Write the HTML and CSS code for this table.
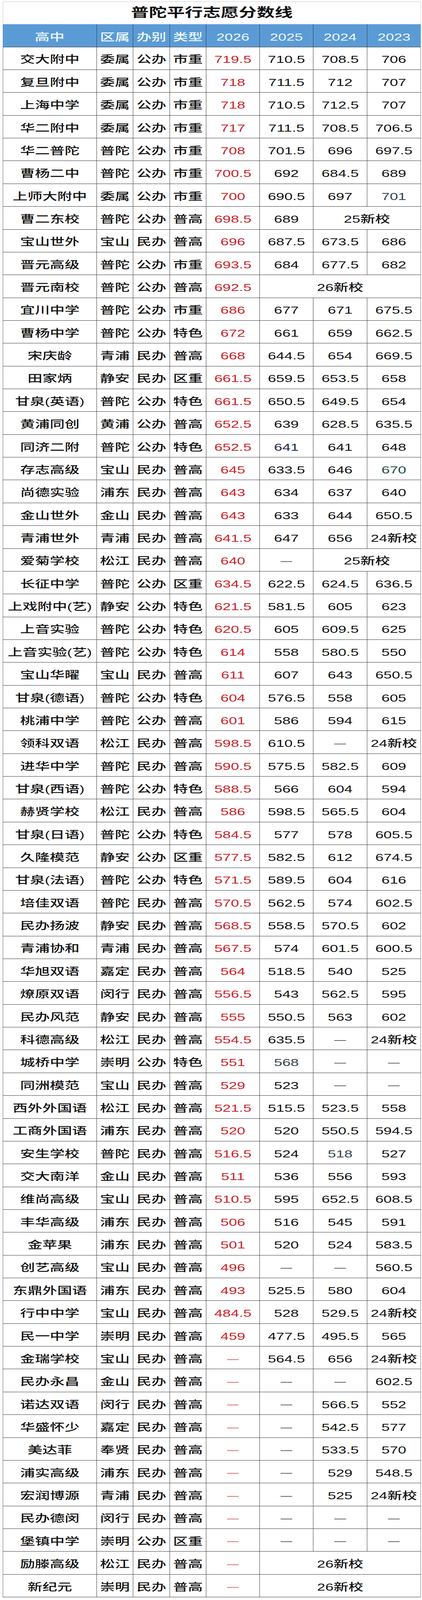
FILE: index.html
```html
<!DOCTYPE html>
<html lang="zh-CN">
<head>
<meta charset="utf-8">
<title>普陀平行志愿分数线</title>
<link rel="stylesheet" href="styles.css">
</head>
<body>
<div class="sheet">
  <div class="title"><span>普陀平行志愿分数线</span></div>
  <div class="row head">
    <div class="c"><span>高中</span></div><div class="c"><span>区属</span></div><div class="c"><span>办别</span></div><div class="c"><span>类型</span></div>
    <div class="c"><span>2026</span></div><div class="c"><span>2025</span></div><div class="c"><span>2024</span></div><div class="c"><span>2023</span></div>
  </div>

  <div class="row"><div class="c"><span>交大附中</span></div><div class="c"><span>委属</span></div><div class="c"><span>公办</span></div><div class="c"><span>市重</span></div><div class="c r"><span>719.5</span></div><div class="c"><span>710.5</span></div><div class="c"><span>708.5</span></div><div class="c"><span>706</span></div></div>
  <div class="row"><div class="c"><span>复旦附中</span></div><div class="c"><span>委属</span></div><div class="c"><span>公办</span></div><div class="c"><span>市重</span></div><div class="c r"><span>718</span></div><div class="c"><span>711.5</span></div><div class="c"><span>712</span></div><div class="c"><span>707</span></div></div>
  <div class="row"><div class="c"><span>上海中学</span></div><div class="c"><span>委属</span></div><div class="c"><span>公办</span></div><div class="c"><span>市重</span></div><div class="c r"><span>718</span></div><div class="c"><span>710.5</span></div><div class="c"><span>712.5</span></div><div class="c"><span>707</span></div></div>
  <div class="row"><div class="c"><span>华二附中</span></div><div class="c"><span>委属</span></div><div class="c"><span>公办</span></div><div class="c"><span>市重</span></div><div class="c r"><span>717</span></div><div class="c"><span>711.5</span></div><div class="c"><span>708.5</span></div><div class="c"><span>706.5</span></div></div>
  <div class="row"><div class="c"><span>华二普陀</span></div><div class="c"><span>普陀</span></div><div class="c"><span>公办</span></div><div class="c"><span>市重</span></div><div class="c r"><span>708</span></div><div class="c"><span>701.5</span></div><div class="c"><span>696</span></div><div class="c"><span>697.5</span></div></div>
  <div class="row"><div class="c"><span>曹杨二中</span></div><div class="c"><span>普陀</span></div><div class="c"><span>公办</span></div><div class="c"><span>市重</span></div><div class="c r"><span>700.5</span></div><div class="c"><span>692</span></div><div class="c"><span>684.5</span></div><div class="c"><span>689</span></div></div>
  <div class="row"><div class="c"><span>上师大附中</span></div><div class="c"><span>委属</span></div><div class="c"><span>公办</span></div><div class="c"><span>市重</span></div><div class="c r"><span>700</span></div><div class="c"><span>690.5</span></div><div class="c"><span>697</span></div><div class="c slate"><span>701</span></div></div>
  <div class="row"><div class="c"><span>曹二东校</span></div><div class="c"><span>普陀</span></div><div class="c"><span>公办</span></div><div class="c"><span>普高</span></div><div class="c r"><span>698.5</span></div><div class="c"><span>689</span></div><div class="c span2"><span>25新校</span></div></div>
  <div class="row"><div class="c"><span>宝山世外</span></div><div class="c"><span>宝山</span></div><div class="c"><span>民办</span></div><div class="c"><span>普高</span></div><div class="c r"><span>696</span></div><div class="c"><span>687.5</span></div><div class="c"><span>673.5</span></div><div class="c"><span>686</span></div></div>
  <div class="row"><div class="c"><span>晋元高级</span></div><div class="c"><span>普陀</span></div><div class="c"><span>公办</span></div><div class="c"><span>市重</span></div><div class="c r"><span>693.5</span></div><div class="c"><span>684</span></div><div class="c"><span>677.5</span></div><div class="c"><span>682</span></div></div>
  <div class="row"><div class="c"><span>晋元南校</span></div><div class="c"><span>普陀</span></div><div class="c"><span>公办</span></div><div class="c"><span>普高</span></div><div class="c r"><span>692.5</span></div><div class="c span3"><span>26新校</span></div></div>
  <div class="row"><div class="c"><span>宜川中学</span></div><div class="c"><span>普陀</span></div><div class="c"><span>公办</span></div><div class="c"><span>市重</span></div><div class="c r"><span>686</span></div><div class="c"><span>677</span></div><div class="c"><span>671</span></div><div class="c"><span>675.5</span></div></div>
  <div class="row"><div class="c"><span>曹杨中学</span></div><div class="c"><span>普陀</span></div><div class="c"><span>公办</span></div><div class="c"><span>特色</span></div><div class="c r"><span>672</span></div><div class="c"><span>661</span></div><div class="c"><span>659</span></div><div class="c"><span>662.5</span></div></div>
  <div class="row"><div class="c"><span>宋庆龄</span></div><div class="c"><span>青浦</span></div><div class="c"><span>民办</span></div><div class="c"><span>普高</span></div><div class="c r"><span>668</span></div><div class="c"><span>644.5</span></div><div class="c"><span>654</span></div><div class="c"><span>669.5</span></div></div>
  <div class="row"><div class="c"><span>田家炳</span></div><div class="c"><span>静安</span></div><div class="c"><span>民办</span></div><div class="c"><span>区重</span></div><div class="c r"><span>661.5</span></div><div class="c"><span>659.5</span></div><div class="c"><span>653.5</span></div><div class="c"><span>658</span></div></div>
  <div class="row"><div class="c"><span>甘泉(英语)</span></div><div class="c"><span>普陀</span></div><div class="c"><span>公办</span></div><div class="c"><span>特色</span></div><div class="c r"><span>661.5</span></div><div class="c"><span>650.5</span></div><div class="c"><span>649.5</span></div><div class="c"><span>654</span></div></div>
  <div class="row"><div class="c"><span>黄浦同创</span></div><div class="c"><span>黄浦</span></div><div class="c"><span>公办</span></div><div class="c"><span>普高</span></div><div class="c r"><span>652.5</span></div><div class="c"><span>639</span></div><div class="c"><span>628.5</span></div><div class="c"><span>635.5</span></div></div>
  <div class="row"><div class="c"><span>同济二附</span></div><div class="c"><span>普陀</span></div><div class="c"><span>公办</span></div><div class="c"><span>特色</span></div><div class="c r"><span>652.5</span></div><div class="c navy"><span>641</span></div><div class="c"><span>641</span></div><div class="c"><span>648</span></div></div>
  <div class="row"><div class="c"><span>存志高级</span></div><div class="c"><span>宝山</span></div><div class="c"><span>民办</span></div><div class="c"><span>普高</span></div><div class="c r"><span>645</span></div><div class="c"><span>633.5</span></div><div class="c"><span>646</span></div><div class="c teal"><span>670</span></div></div>
  <div class="row"><div class="c"><span>尚德实验</span></div><div class="c"><span>浦东</span></div><div class="c"><span>民办</span></div><div class="c"><span>普高</span></div><div class="c r"><span>643</span></div><div class="c"><span>634</span></div><div class="c"><span>637</span></div><div class="c"><span>640</span></div></div>
  <div class="row"><div class="c"><span>金山世外</span></div><div class="c"><span>金山</span></div><div class="c"><span>民办</span></div><div class="c"><span>普高</span></div><div class="c r"><span>643</span></div><div class="c"><span>633</span></div><div class="c"><span>644</span></div><div class="c"><span>650.5</span></div></div>
  <div class="row"><div class="c"><span>青浦世外</span></div><div class="c"><span>青浦</span></div><div class="c"><span>民办</span></div><div class="c"><span>普高</span></div><div class="c r"><span>641.5</span></div><div class="c"><span>647</span></div><div class="c"><span>656</span></div><div class="c"><span>24新校</span></div></div>
  <div class="row"><div class="c"><span>爱菊学校</span></div><div class="c"><span>松江</span></div><div class="c"><span>民办</span></div><div class="c"><span>普高</span></div><div class="c r"><span>640</span></div><div class="c dash"><span>—</span></div><div class="c span2"><span>25新校</span></div></div>
  <div class="row"><div class="c"><span>长征中学</span></div><div class="c"><span>普陀</span></div><div class="c"><span>公办</span></div><div class="c"><span>区重</span></div><div class="c r"><span>634.5</span></div><div class="c"><span>622.5</span></div><div class="c"><span>624.5</span></div><div class="c"><span>636.5</span></div></div>
  <div class="row"><div class="c"><span>上戏附中(艺)</span></div><div class="c"><span>静安</span></div><div class="c"><span>公办</span></div><div class="c"><span>特色</span></div><div class="c r"><span>621.5</span></div><div class="c"><span>581.5</span></div><div class="c"><span>605</span></div><div class="c"><span>623</span></div></div>
  <div class="row"><div class="c"><span>上音实验</span></div><div class="c"><span>普陀</span></div><div class="c"><span>公办</span></div><div class="c"><span>特色</span></div><div class="c r"><span>620.5</span></div><div class="c"><span>605</span></div><div class="c"><span>609.5</span></div><div class="c"><span>625</span></div></div>
  <div class="row"><div class="c"><span>上音实验(艺)</span></div><div class="c"><span>普陀</span></div><div class="c"><span>公办</span></div><div class="c"><span>特色</span></div><div class="c r"><span>614</span></div><div class="c"><span>558</span></div><div class="c"><span>580.5</span></div><div class="c"><span>550</span></div></div>
  <div class="row"><div class="c"><span>宝山华曜</span></div><div class="c"><span>宝山</span></div><div class="c"><span>民办</span></div><div class="c"><span>普高</span></div><div class="c r"><span>611</span></div><div class="c"><span>607</span></div><div class="c"><span>643</span></div><div class="c"><span>650.5</span></div></div>
  <div class="row"><div class="c"><span>甘泉(德语)</span></div><div class="c"><span>普陀</span></div><div class="c"><span>公办</span></div><div class="c"><span>特色</span></div><div class="c r"><span>604</span></div><div class="c"><span>576.5</span></div><div class="c"><span>558</span></div><div class="c"><span>605</span></div></div>
  <div class="row"><div class="c"><span>桃浦中学</span></div><div class="c"><span>普陀</span></div><div class="c"><span>公办</span></div><div class="c"><span>普高</span></div><div class="c r"><span>601</span></div><div class="c"><span>586</span></div><div class="c"><span>594</span></div><div class="c"><span>615</span></div></div>
  <div class="row"><div class="c"><span>领科双语</span></div><div class="c"><span>松江</span></div><div class="c"><span>民办</span></div><div class="c"><span>普高</span></div><div class="c r"><span>598.5</span></div><div class="c"><span>610.5</span></div><div class="c dash"><span>—</span></div><div class="c"><span>24新校</span></div></div>
  <div class="row"><div class="c"><span>进华中学</span></div><div class="c"><span>普陀</span></div><div class="c"><span>民办</span></div><div class="c"><span>普高</span></div><div class="c r"><span>590.5</span></div><div class="c"><span>575.5</span></div><div class="c"><span>582.5</span></div><div class="c"><span>609</span></div></div>
  <div class="row"><div class="c"><span>甘泉(西语)</span></div><div class="c"><span>普陀</span></div><div class="c"><span>公办</span></div><div class="c"><span>特色</span></div><div class="c r"><span>588.5</span></div><div class="c"><span>566</span></div><div class="c"><span>604</span></div><div class="c"><span>594</span></div></div>
  <div class="row"><div class="c"><span>赫贤学校</span></div><div class="c"><span>松江</span></div><div class="c"><span>民办</span></div><div class="c"><span>普高</span></div><div class="c r"><span>586</span></div><div class="c"><span>598.5</span></div><div class="c"><span>565.5</span></div><div class="c"><span>604</span></div></div>
  <div class="row"><div class="c"><span>甘泉(日语)</span></div><div class="c"><span>普陀</span></div><div class="c"><span>公办</span></div><div class="c"><span>特色</span></div><div class="c r"><span>584.5</span></div><div class="c"><span>577</span></div><div class="c"><span>578</span></div><div class="c"><span>605.5</span></div></div>
  <div class="row"><div class="c"><span>久隆模范</span></div><div class="c"><span>静安</span></div><div class="c"><span>公办</span></div><div class="c"><span>区重</span></div><div class="c r"><span>577.5</span></div><div class="c"><span>582.5</span></div><div class="c"><span>612</span></div><div class="c"><span>674.5</span></div></div>
  <div class="row"><div class="c"><span>甘泉(法语)</span></div><div class="c"><span>普陀</span></div><div class="c"><span>公办</span></div><div class="c"><span>特色</span></div><div class="c r"><span>571.5</span></div><div class="c"><span>589.5</span></div><div class="c"><span>604</span></div><div class="c"><span>616</span></div></div>
  <div class="row"><div class="c"><span>培佳双语</span></div><div class="c"><span>普陀</span></div><div class="c"><span>民办</span></div><div class="c"><span>普高</span></div><div class="c r"><span>570.5</span></div><div class="c"><span>562.5</span></div><div class="c"><span>574</span></div><div class="c"><span>602.5</span></div></div>
  <div class="row"><div class="c"><span>民办扬波</span></div><div class="c"><span>静安</span></div><div class="c"><span>民办</span></div><div class="c"><span>普高</span></div><div class="c r"><span>568.5</span></div><div class="c"><span>558.5</span></div><div class="c"><span>570.5</span></div><div class="c"><span>602</span></div></div>
  <div class="row"><div class="c"><span>青浦协和</span></div><div class="c"><span>青浦</span></div><div class="c"><span>民办</span></div><div class="c"><span>普高</span></div><div class="c r"><span>567.5</span></div><div class="c"><span>574</span></div><div class="c"><span>601.5</span></div><div class="c"><span>600.5</span></div></div>
  <div class="row"><div class="c"><span>华旭双语</span></div><div class="c"><span>嘉定</span></div><div class="c"><span>民办</span></div><div class="c"><span>普高</span></div><div class="c r"><span>564</span></div><div class="c"><span>518.5</span></div><div class="c"><span>540</span></div><div class="c"><span>525</span></div></div>
  <div class="row"><div class="c"><span>燎原双语</span></div><div class="c"><span>闵行</span></div><div class="c"><span>民办</span></div><div class="c"><span>普高</span></div><div class="c r"><span>556.5</span></div><div class="c"><span>543</span></div><div class="c"><span>562.5</span></div><div class="c"><span>595</span></div></div>
  <div class="row"><div class="c"><span>民办风范</span></div><div class="c"><span>静安</span></div><div class="c"><span>民办</span></div><div class="c"><span>普高</span></div><div class="c r"><span>555</span></div><div class="c"><span>550.5</span></div><div class="c"><span>563</span></div><div class="c"><span>602</span></div></div>
  <div class="row"><div class="c"><span>科德高级</span></div><div class="c"><span>松江</span></div><div class="c"><span>民办</span></div><div class="c"><span>普高</span></div><div class="c r"><span>554.5</span></div><div class="c"><span>635.5</span></div><div class="c dash"><span>—</span></div><div class="c"><span>24新校</span></div></div>
  <div class="row"><div class="c"><span>城桥中学</span></div><div class="c"><span>崇明</span></div><div class="c"><span>公办</span></div><div class="c"><span>特色</span></div><div class="c r"><span>551</span></div><div class="c slate"><span>568</span></div><div class="c dash"><span>—</span></div><div class="c dash"><span>—</span></div></div>
  <div class="row"><div class="c"><span>同洲模范</span></div><div class="c"><span>宝山</span></div><div class="c"><span>民办</span></div><div class="c"><span>普高</span></div><div class="c r"><span>529</span></div><div class="c"><span>523</span></div><div class="c dash"><span>—</span></div><div class="c dash"><span>—</span></div></div>
  <div class="row"><div class="c"><span>西外外国语</span></div><div class="c"><span>松江</span></div><div class="c"><span>民办</span></div><div class="c"><span>普高</span></div><div class="c r"><span>521.5</span></div><div class="c"><span>515.5</span></div><div class="c"><span>523.5</span></div><div class="c"><span>558</span></div></div>
  <div class="row"><div class="c"><span>工商外国语</span></div><div class="c"><span>浦东</span></div><div class="c"><span>民办</span></div><div class="c"><span>普高</span></div><div class="c r"><span>520</span></div><div class="c"><span>520</span></div><div class="c"><span>550.5</span></div><div class="c"><span>594.5</span></div></div>
  <div class="row"><div class="c"><span>安生学校</span></div><div class="c"><span>普陀</span></div><div class="c"><span>民办</span></div><div class="c"><span>普高</span></div><div class="c r"><span>516.5</span></div><div class="c"><span>524</span></div><div class="c slate"><span>518</span></div><div class="c"><span>527</span></div></div>
  <div class="row"><div class="c"><span>交大南洋</span></div><div class="c"><span>金山</span></div><div class="c"><span>民办</span></div><div class="c"><span>普高</span></div><div class="c r"><span>511</span></div><div class="c"><span>536</span></div><div class="c"><span>556</span></div><div class="c"><span>593</span></div></div>
  <div class="row"><div class="c"><span>维尚高级</span></div><div class="c"><span>宝山</span></div><div class="c"><span>民办</span></div><div class="c"><span>普高</span></div><div class="c r"><span>510.5</span></div><div class="c"><span>595</span></div><div class="c"><span>652.5</span></div><div class="c"><span>608.5</span></div></div>
  <div class="row"><div class="c"><span>丰华高级</span></div><div class="c"><span>浦东</span></div><div class="c"><span>民办</span></div><div class="c"><span>普高</span></div><div class="c r"><span>506</span></div><div class="c"><span>516</span></div><div class="c"><span>545</span></div><div class="c"><span>591</span></div></div>
  <div class="row"><div class="c"><span>金苹果</span></div><div class="c"><span>浦东</span></div><div class="c"><span>民办</span></div><div class="c"><span>普高</span></div><div class="c r"><span>501</span></div><div class="c"><span>520</span></div><div class="c"><span>524</span></div><div class="c"><span>583.5</span></div></div>
  <div class="row"><div class="c"><span>创艺高级</span></div><div class="c"><span>宝山</span></div><div class="c"><span>民办</span></div><div class="c"><span>普高</span></div><div class="c r"><span>496</span></div><div class="c dash"><span>—</span></div><div class="c dash"><span>—</span></div><div class="c"><span>560.5</span></div></div>
  <div class="row"><div class="c"><span>东鼎外国语</span></div><div class="c"><span>浦东</span></div><div class="c"><span>民办</span></div><div class="c"><span>普高</span></div><div class="c r"><span>493</span></div><div class="c"><span>525.5</span></div><div class="c"><span>580</span></div><div class="c"><span>604</span></div></div>
  <div class="row"><div class="c"><span>行中中学</span></div><div class="c"><span>宝山</span></div><div class="c"><span>民办</span></div><div class="c"><span>普高</span></div><div class="c r"><span>484.5</span></div><div class="c"><span>528</span></div><div class="c"><span>529.5</span></div><div class="c"><span>24新校</span></div></div>
  <div class="row"><div class="c"><span>民一中学</span></div><div class="c"><span>崇明</span></div><div class="c"><span>民办</span></div><div class="c"><span>普高</span></div><div class="c r"><span>459</span></div><div class="c"><span>477.5</span></div><div class="c"><span>495.5</span></div><div class="c"><span>565</span></div></div>
  <div class="row"><div class="c"><span>金瑞学校</span></div><div class="c"><span>宝山</span></div><div class="c"><span>民办</span></div><div class="c"><span>普高</span></div><div class="c r dash"><span>—</span></div><div class="c"><span>564.5</span></div><div class="c"><span>656</span></div><div class="c"><span>24新校</span></div></div>
  <div class="row"><div class="c"><span>民办永昌</span></div><div class="c"><span>金山</span></div><div class="c"><span>民办</span></div><div class="c"><span>普高</span></div><div class="c r dash"><span>—</span></div><div class="c dash"><span>—</span></div><div class="c dash"><span>—</span></div><div class="c"><span>602.5</span></div></div>
  <div class="row"><div class="c"><span>诺达双语</span></div><div class="c"><span>闵行</span></div><div class="c"><span>民办</span></div><div class="c"><span>普高</span></div><div class="c r dash"><span>—</span></div><div class="c dash"><span>—</span></div><div class="c"><span>566.5</span></div><div class="c"><span>552</span></div></div>
  <div class="row"><div class="c"><span>华盛怀少</span></div><div class="c"><span>嘉定</span></div><div class="c"><span>民办</span></div><div class="c"><span>普高</span></div><div class="c r dash"><span>—</span></div><div class="c dash"><span>—</span></div><div class="c"><span>542.5</span></div><div class="c"><span>577</span></div></div>
  <div class="row"><div class="c"><span>美达菲</span></div><div class="c"><span>奉贤</span></div><div class="c"><span>民办</span></div><div class="c"><span>普高</span></div><div class="c r dash"><span>—</span></div><div class="c dash"><span>—</span></div><div class="c"><span>533.5</span></div><div class="c"><span>570</span></div></div>
  <div class="row"><div class="c"><span>浦实高级</span></div><div class="c"><span>浦东</span></div><div class="c"><span>民办</span></div><div class="c"><span>普高</span></div><div class="c r dash"><span>—</span></div><div class="c dash"><span>—</span></div><div class="c"><span>529</span></div><div class="c"><span>548.5</span></div></div>
  <div class="row"><div class="c"><span>宏润博源</span></div><div class="c"><span>青浦</span></div><div class="c"><span>民办</span></div><div class="c"><span>普高</span></div><div class="c r dash"><span>—</span></div><div class="c dash"><span>—</span></div><div class="c"><span>525</span></div><div class="c"><span>24新校</span></div></div>
  <div class="row"><div class="c"><span>民办德闵</span></div><div class="c"><span>闵行</span></div><div class="c"><span>民办</span></div><div class="c"><span>普高</span></div><div class="c r dash"><span>—</span></div><div class="c dash"><span>—</span></div><div class="c dash"><span>—</span></div><div class="c dash"><span>—</span></div></div>
  <div class="row"><div class="c"><span>堡镇中学</span></div><div class="c"><span>崇明</span></div><div class="c"><span>公办</span></div><div class="c"><span>区重</span></div><div class="c r dash"><span>—</span></div><div class="c dash"><span>—</span></div><div class="c dash"><span>—</span></div><div class="c dash"><span>—</span></div></div>
  <div class="row"><div class="c"><span>励滕高级</span></div><div class="c"><span>松江</span></div><div class="c"><span>民办</span></div><div class="c"><span>普高</span></div><div class="c r dash"><span>—</span></div><div class="c span3"><span>26新校</span></div></div>
  <div class="row"><div class="c"><span>新纪元</span></div><div class="c"><span>崇明</span></div><div class="c"><span>民办</span></div><div class="c"><span>普高</span></div><div class="c r dash"><span>—</span></div><div class="c span3"><span>26新校</span></div></div>
</div>
</body>
</html>
```

FILE: styles.css
```css
* { box-sizing: border-box; }

/* Vertical sizes are given as fractions of the 5873px frame height,
   so the sheet always fills the window from top to bottom. */
:root {
  --sy: 1;
}

@supports (transform: scaleY(tan(atan2(1px, 2px)))) {
  :root {
    /* window height / 5873px, as a plain number */
    --sy: tan(atan2(100vh, 5873px));
  }
}

html, body {
  margin: 0;
  padding: 0;
  background: #ffffff;
}

body {
  font-family: "Liberation Sans", "Noto Sans CJK SC", sans-serif;
  color: #111111;
}

.sheet {
  width: 1070px;
  margin-left: 7px;
  padding-top: 0.1022vh;
}

.title {
  height: 1.4133vh;
  border: 1px solid #c9c9c9;
  border-bottom: none;
  display: flex;
  align-items: center;
  justify-content: center;
  padding-bottom: 0.2384vh;
  font-family: "Noto Sans CJK SC", sans-serif;
  font-weight: 700;
  font-size: 46px;
  line-height: 1;
  color: #111111;
}

.title > span,
.c > span {
  display: inline-block;
  transform: scaleY(var(--sy));
}

.row {
  display: grid;
  grid-template-columns: 241px 93px 94px 93px 137px 137px 138px 137px;
  height: 1.42517vh;
  border-bottom: 1.6px solid #3c3c3c;
}

.row:not(.head) .c:first-child {
  border-left: 1.5px solid #6a6a6a;
}

.head {
  height: 1.4303vh;
  background: #5b9bd5;
  color: #eefaff;
}

.c {
  display: flex;
  align-items: center;
  justify-content: center;
  padding-top: 0.1532vh;
  border-right: 1.5px solid #3c3c3c;
  font-size: 38px;
  font-weight: 500;
  line-height: 1;
  white-space: nowrap;
  min-width: 0;
}

.c:last-child {
  border-right-color: #7a7a7a;
}

.head .c {
  padding-top: 0.2043vh;
  border-right-color: #2f3f55;
}

.head .c:last-child {
  border-right: none;
}

.span2 { grid-column: span 2; }
.span3 { grid-column: span 3; }

.r { color: #cc2229; }
.slate { color: #34434c; }
.navy { color: #1b2a46; }
.teal { color: #1e4a42; }

.dash {
  font-size: 30px;
  padding-top: 0.1362vh;
}
```
